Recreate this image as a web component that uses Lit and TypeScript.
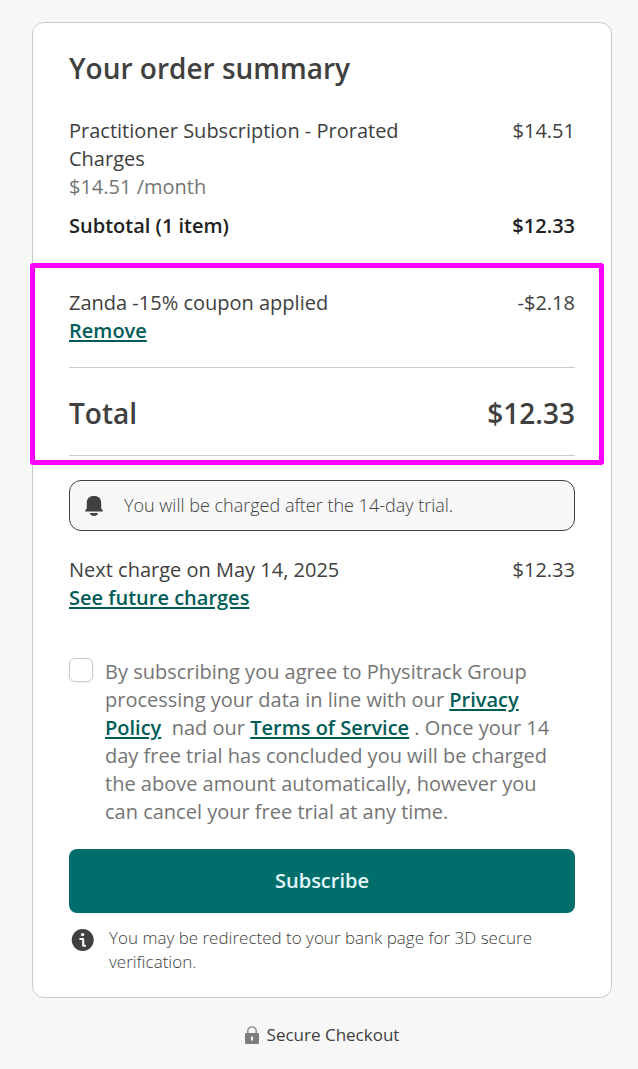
import { LitElement, html, css } from "lit";
import { customElement, property, state } from "lit/decorators.js";

@customElement("summary-row")
class SummaryRow extends LitElement {
  @property() label = "";
  @property() amount = "";
  @property() tone = "normal";

  static styles = css`
    :host {
      display: block;
    }
    .row {
      display: flex;
      justify-content: space-between;
      gap: 32px;
    }
    .label {
      flex: 0 1 360px;
    }
    .amount {
      white-space: nowrap;
    }
    .strong {
      color: #212121;
      font-weight: 600;
    }
    .total {
      font-size: 28px;
      line-height: 40px;
      font-weight: 600;
    }
  `;

  render() {
    return html`
      <div class="row ${this.tone}">
        <span class="label">${this.label}</span>
        <span class="amount">${this.amount}</span>
      </div>
      <slot></slot>
    `;
  }
}

@customElement("app-root")
class AppRoot extends LitElement {
  @state() private agreed = false;

  static styles = css`
    :host {
      display: block;
      min-height: 100vh;
      box-sizing: border-box;
      padding: 22px 26px 20px 32px;
      background: #f7f7f7;
      color: #404040;
      font-family: "Open Sans", "Noto Sans", sans-serif;
      font-size: 20px;
      line-height: 28px;
    }
    .card {
      padding: 25px 36px 23px;
      background: #fff;
      border: 1px solid #c9c9d1;
      border-radius: 12px;
    }
    .title {
      margin: 0 0 29px;
      font-size: 28px;
      line-height: 40px;
      font-weight: 600;
    }
    .muted {
      color: #757575;
    }
    .subtotal {
      margin-top: 11px;
    }
    .link {
      color: #005c58;
      font-weight: 600;
      text-decoration: underline;
      text-decoration-thickness: 2px;
      text-underline-offset: 2px;
    }
    .plain {
      padding: 0;
      border: 0;
      background: none;
      font: inherit;
      font-weight: 600;
      cursor: pointer;
    }
    .marked {
      position: relative;
      margin-top: 23px;
      padding-top: 26px;
    }
    .marked::after {
      content: "";
      position: absolute;
      inset: 0 -29px -9px -39px;
      border: 5px solid #ff00ff;
      border-radius: 3px;
      pointer-events: none;
    }
    .action {
      display: block;
    }
    .totals {
      margin-top: 22px;
      padding: 25px 0 22px;
      border: solid #c9c9d1;
      border-width: 1px 0;
    }
    .notice {
      display: flex;
      align-items: center;
      gap: 19px;
      margin: 24px 0 25px;
      padding: 10px 13px;
      border: 1px solid #404040;
      border-radius: 12px;
      background: #f7f7f7;
      font-size: 18px;
      line-height: 29px;
      font-weight: 300;
    }
    .bell {
      flex: none;
      width: 22px;
      height: 22px;
    }
    .consent {
      display: flex;
      gap: 12px;
      margin-top: 46px;
      padding-right: 16px;
      color: #757575;
    }
    .box {
      flex: none;
      appearance: none;
      width: 24px;
      height: 24px;
      margin: 0;
      border: 1px solid #c9c9d6;
      border-radius: 6px;
      background: #fff;
      box-shadow: 0 1px 3px rgba(0, 0, 0, 0.08);
    }
    .box:checked {
      background: #006e6b;
    }
    .submit {
      display: block;
      width: 100%;
      margin-top: 23px;
      padding: 18px;
      border: 0;
      border-radius: 8px;
      background: #006e6b;
      color: #e3f6fc;
      font: inherit;
      font-weight: 600;
      cursor: pointer;
    }
    .note {
      display: flex;
      gap: 14px;
      margin-top: 13px;
      padding-left: 2px;
      font-size: 17px;
      line-height: 24px;
      font-weight: 300;
    }
    .note p {
      margin: 0;
    }
    .info {
      flex: none;
      width: 24px;
      height: 24px;
      margin-top: 2px;
    }
    .secure {
      display: flex;
      justify-content: center;
      align-items: center;
      gap: 8px;
      margin-top: 25px;
      font-size: 17px;
      line-height: 24px;
    }
    .lock {
      width: 14px;
      height: 18px;
    }
  `;

  render() {
    return html`
      <main class="card">
        <h1 class="title">Your order summary</h1>
        <summary-row label="Practitioner Subscription - Prorated Charges" amount="$14.51">
          <span class="muted">$14.51 /month</span>
        </summary-row>
        <summary-row class="subtotal" tone="strong" label="Subtotal (1 item)" amount="$12.33"></summary-row>

        <section class="marked">
          <summary-row label="Zanda -15% coupon applied" amount="-$2.18">
            <button class="link plain action" type="button">Remove</button>
          </summary-row>
          <div class="totals">
            <summary-row tone="total" label="Total" amount="$12.33"></summary-row>
          </div>
        </section>

        <div class="notice">
          <svg class="bell" viewBox="0 0 22 22" fill="#404040" aria-hidden="true">
            <path d="M10.900 1C6.300 1 3.800 3.600 3.800 7.600v5.600L2.300 15.400c-.4.6-.1 1.100.6 1.100h16.200c.7 0 1-.5.6-1.100L18.200 13.200V7.600C18.200 3.600 15.600 1 10.900 1z" />
            <path d="M7 18h8c-.2 1.900-1.800 3-4 3s-3.800-1.100-4-3z" />
          </svg>
          <span>You will be charged after the 14-day trial.</span>
        </div>

        <summary-row label="Next charge on May 14, 2025" amount="$12.33">
          <a class="link" href="#charges">See future charges</a>
        </summary-row>

        <div class="consent">
          <input
            class="box"
            id="agree"
            type="checkbox"
            .checked=${this.agreed}
            @change=${() => (this.agreed = !this.agreed)}
          />
          <label for="agree"
            >By subscribing you agree to Physitrack Group processing your data in line with our
            <a class="link" href="#privacy">Privacy Policy</a>&nbsp; nad our
            <a class="link" href="#terms">Terms of Service</a> . Once your 14 day free trial has
            concluded you will be charged the above amount automatically, however you can cancel
            your free trial at any time.</label
          >
        </div>

        <button class="submit" type="button">Subscribe</button>

        <div class="note">
          <svg class="info" viewBox="0 0 24 24" aria-hidden="true">
            <circle cx="11.700" cy="12" r="11" fill="#404040" />
            <circle cx="11.600" cy="6.600" r="1.700" fill="#fff" />
            <path d="M9.200 11h3v6.800M12.100 17.800h2" fill="none" stroke="#fff" stroke-width="2" stroke-linecap="round" stroke-linejoin="round" />
          </svg>
          <p>You may be redirected to your bank page for 3D secure verification.</p>
        </div>
      </main>

      <footer class="secure">
        <svg class="lock" viewBox="0 0 14 18" aria-hidden="true">
          <path d="M2.800 8V5a4.200 4.200 0 0 1 8.400 0v3" fill="none" stroke="#858585" stroke-width="1.300" />
          <rect y="7" width="14" height="11" rx="1" fill="#7d7d80" />
          <path d="M6 10.500h2v4H6z" fill="#f7f7f7" />
        </svg>
        <span>Secure Checkout</span>
      </footer>
    `;
  }
}
